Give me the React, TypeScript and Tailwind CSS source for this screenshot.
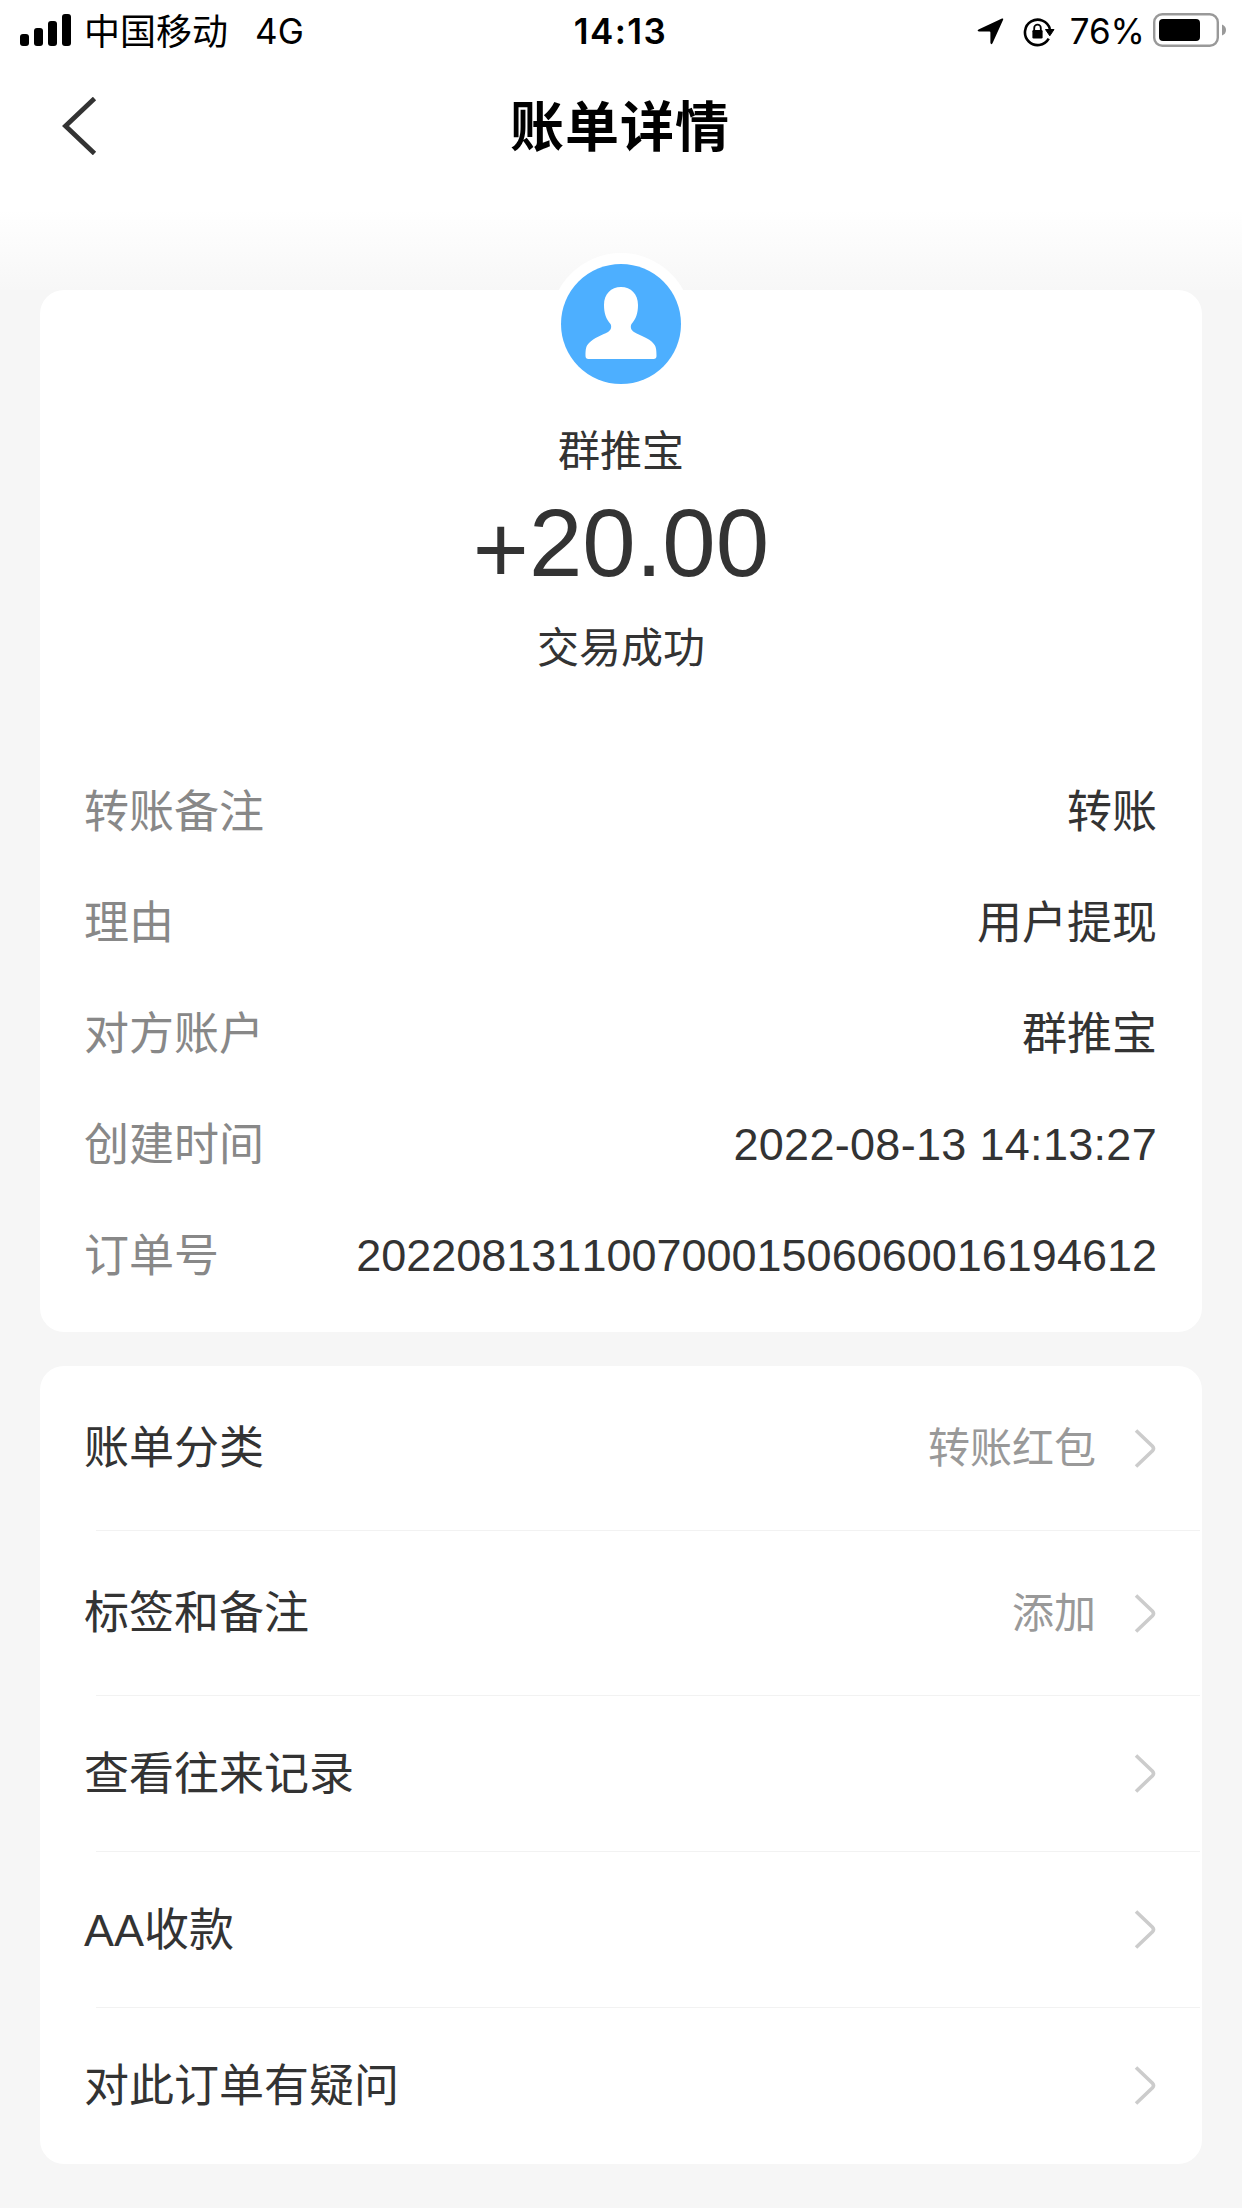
import { ReactNode } from 'react'

const details = [
  { label: '转账备注', value: '转账', valueClass: 'pt-[4px]' },
  { label: '理由', value: '用户提现', valueClass: 'pt-[4px]' },
  { label: '对方账户', value: '群推宝', valueClass: 'pt-[4px]' },
  { label: '创建时间', value: '2022-08-13 14:13:27', valueClass: 'pt-px tracking-[0.3px]' },
  { label: '订单号', value: '20220813110070001506060016194612', valueClass: 'pt-px' },
]

function StatusBar() {
  return (
    <div className="flex h-[64px] items-center justify-between pl-5 pr-4 font-['Inter','Noto_Sans_CJK_SC',sans-serif] text-[35px] leading-none text-black">
      <div className="flex flex-1 items-center">
        <svg width="52" height="32" viewBox="0 0 52 32" className="-mt-1 shrink-0">
          <rect x="0" y="20" width="9" height="12" rx="3" />
          <rect x="14" y="14" width="9" height="18" rx="3" />
          <rect x="28" y="7" width="9" height="25" rx="3" />
          <rect x="42" y="0" width="9" height="32" rx="3" />
        </svg>
        <span className="ml-[12px] text-[36px]">中国移动</span>
        <span className="-mt-0.5 ml-[27px]">4G</span>
      </div>
      <span className="-mt-0.5 mr-[6px] font-semibold tracking-[1.4px]">14:13</span>
      <div className="-mr-[1px] flex flex-1 items-center justify-end">
        <svg width="27" height="27" viewBox="0 0 27 27" className="-mt-0.5">
          <path d="M25 0.6 Q26.8 0 26 2 L15.5 25.2 Q14 27.4 13.4 24.8 V14.5 Q13.4 13.6 12.5 13.6 L2 13.5 Q-0.6 13 1.5 11.4 Z" />
        </svg>
        <svg width="32" height="30" viewBox="0 0 32 30" className="-mt-px ml-[19px]" fill="none">
          <path d="M25.7 21.7 A12.7 12.7 0 1 1 26.9 12" stroke="#000" strokeWidth="2.6" />
          <path d="M22.5 12.5 H31 L26.8 18.8 Z" fill="#000" stroke="#000" strokeLinejoin="round" />
          <rect x="9.4" y="13" width="10.2" height="8.4" rx="1.2" fill="#000" />
          <path d="M11.2 14 V11 a3.3 3.3 0 0 1 6.6 0 V14" stroke="#000" strokeWidth="1.8" />
        </svg>
        <span className="-mt-0.5 ml-[15px]">76%</span>
        <svg width="74" height="34" viewBox="0 0 74 34" className="ml-[8px] -mt-1">
          <rect x="1.2" y="1.2" width="63.6" height="31.6" rx="8" fill="none" stroke="#999" strokeWidth="2.4" />
          <rect x="6" y="6" width="41" height="22" rx="4" />
          <path d="M69 11.5 Q73 13 73 17 T69 22.5 Z" fill="#999" />
        </svg>
      </div>
    </div>
  )
}

function Header() {
  return (
    <div className="grid h-[124px] grid-cols-3 items-center">
      <svg width="36" height="58" viewBox="0 0 36 58" className="ml-[62px]" fill="none">
        <path d="M32.5 1.5 L3.5 29 L32.5 56.5" stroke="#333" strokeWidth="4.8" />
      </svg>
      <h1 className="pt-[3px] pr-[2px] text-center text-[54px] leading-none font-bold tracking-[1px] text-black">账单详情</h1>
    </div>
  )
}

function Avatar() {
  return (
    <div className="-mt-[37px] flex size-[142px] items-center justify-center rounded-full bg-white">
      <svg width="120" height="120" viewBox="0 0 120 120">
        <circle cx="60" cy="60" r="60" fill="#4dafff" />
        <path
          d="M60 23 C70 23 77 30 77 41 C77 49 75 55 70.5 60 C69 63 70 66 73 68 C80 72 88 74 92 79 C95 82 95.5 85 95.5 92 Q95.5 95 92.5 95 H27.5 Q24.5 95 24.5 92 C24.5 85 25 82 28 79 C33 74 41 71 47 68 C50 66 51 63 49.5 60 C45 55 43 49 43 41 C43 30 50 23 60 23 Z"
          fill="#fff"
        />
      </svg>
    </div>
  )
}

function Chevron() {
  return (
    <svg width="22" height="40" viewBox="0 0 22 40" fill="none" className="ml-[38px]">
      <path d="M2 1.5 L18.5 17.3 Q20.5 19.5 18.5 21.7 L2 37.5" stroke="#ccc" strokeWidth="3.6" />
    </svg>
  )
}

function MenuRow({ label, tall, last, children }: { label: string; tall?: boolean; last?: boolean; children?: ReactNode }) {
  return (
    <div className={tall ? 'h-[165px]' : 'h-[156px]'}>
      <div className="flex h-full items-center pr-[46px] pl-[44px]">
        <span className="flex-1 text-[45px] leading-none text-[#333]">{label}</span>
        <span className="text-[42px] leading-none text-[#999]">{children}</span>
        <Chevron />
      </div>
      {!last && <div className="-mt-px ml-[56px] mr-[2px] h-px bg-[#f2f2f2]" />}
    </div>
  )
}

export default function App() {
  return (
    <div className="h-[2208px] w-[1242px] overflow-hidden bg-[#f6f6f6] font-['Liberation_Sans','Noto_Sans_CJK_SC',sans-serif]">
      <div className="h-[210px] bg-white">
        <StatusBar />
        <Header />
      </div>
      <div className="h-[80px] bg-linear-to-b from-white to-[#f7f7f7]" />

      {/* Transaction summary */}
      <div className="mx-[40px] flex h-[1042px] flex-col items-center rounded-[24px] bg-white">
        <Avatar />
        <div className="mt-[36px] text-[42px] leading-[42px] text-[#333]">群推宝</div>
        <div className="mt-[22px] text-[96px] leading-[96px] text-[#333]">
          <span className="inline-block translate-y-[7px]">+</span>20.00
        </div>
        <div className="mt-[37px] text-[42px] leading-[42px] text-[#333]">交易成功</div>
        <div className="mt-[85px] w-full pr-[45px] pl-[44px]">
          {details.map((item) => (
            <div key={item.label} className="flex h-[111px] items-center justify-between text-[45px] leading-none text-[#333] [font-kerning:none]">
              <span className="pt-[4px] text-[#888]">{item.label}</span>
              <span className={item.valueClass}>{item.value}</span>
            </div>
          ))}
        </div>
      </div>

      <div className="mx-[40px] mt-[34px] h-[798px] rounded-[24px] bg-white">
        <MenuRow label="账单分类" tall>转账红包</MenuRow>
        <MenuRow label="标签和备注" tall>添加</MenuRow>
        <MenuRow label="查看往来记录" />
        <MenuRow label="AA收款" />
        <MenuRow label="对此订单有疑问" last />
      </div>
    </div>
  )
}
